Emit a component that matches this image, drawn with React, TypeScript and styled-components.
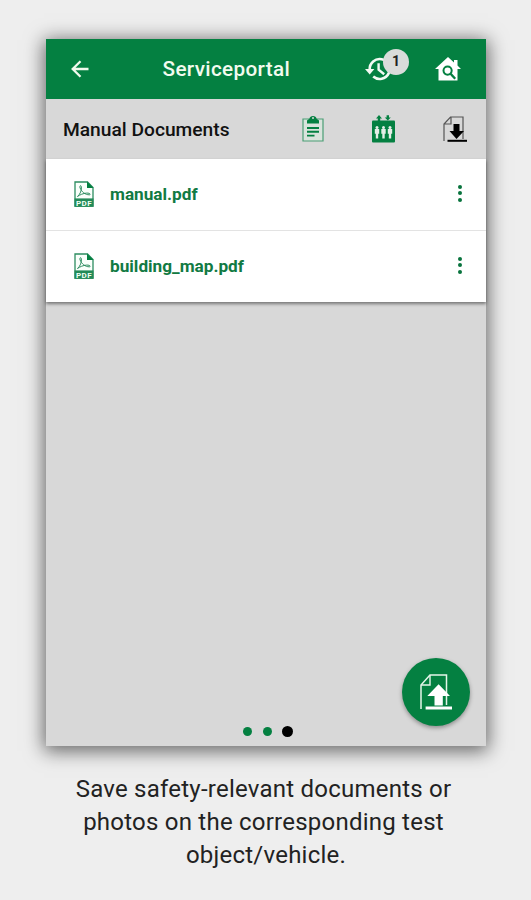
import React from 'react';
import styled, { createGlobalStyle } from 'styled-components';

const GREEN = '#048041';

const documents = ['manual.pdf', 'building_map.pdf'];

const BackIcon = () => (
  <svg width="18" height="18" viewBox="0 0 18 18" fill="none" stroke="#f1faed" strokeWidth="2.3">
    <path d="M17.5 9H2M9.5 1.2L1.7 9l7.8 7.8" />
  </svg>
);

const HistoryIcon = () => (
  <svg width="30" height="26" viewBox="0 0 30 26" fill="none" stroke="#f3faf3">
    <path d="M4.7 13.5A10 10 0 1 1 8.2 20.6" strokeWidth="2.6" />
    <path d="M0 13h9.4l-4.7 5.6z" fill="#f3faf3" stroke="none" />
    <path d="M13.6 7.2v6.4l5.6 4.6" strokeWidth="2.4" />
  </svg>
);

const HomeSearchIcon = () => (
  <svg width="26" height="24" viewBox="0 0 26 24">
    <path d="M13 0l6 5.4V3h3.5v5.6L26 12h-3.5v11.6H3.5V12H0z" fill="#fff" />
    <circle cx="12.6" cy="13.6" r="4.1" fill="none" stroke={GREEN} strokeWidth="2" />
    <path d="M15.6 16.8l4.6 5" stroke={GREEN} strokeWidth="2.4" />
  </svg>
);

const ClipboardIcon = () => (
  <svg width="22" height="27" viewBox="0 0 22 27">
    <path d="M1 4h20v22H1z" fill="#d9e3dc" stroke="#4a9e75" strokeWidth="1.2" />
    <path d="M5 8.6V5.6l2.4-1.8a3.7 3.7 0 0 1 7.2 0L17 5.6v3z" fill={GREEN} />
    <circle cx="11" cy="3" r="1" fill="#d8d8d8" />
    <path d="M5 13h12M5 16.8h12M5 20.6h7.5" stroke={GREEN} strokeWidth="1.9" />
  </svg>
);

const ElevatorIcon = () => (
  <svg width="23" height="28" viewBox="0 0 23 28" fill={GREEN}>
    <path d="M7 0l3 3.4H8.2v2.8H5.8V3.4H4zM15.8 5.6l-3-3.2h1.8V.2H17v2.2h1.8z" />
    <rect x="0" y="5.6" width="23" height="22" rx="1" />
    <g fill="#e5eee7">
      {[5, 11.5, 18].map((x) => (
        <React.Fragment key={x}>
          <circle cx={x} cy="12.4" r="1.5" />
          <path d={`M${x - 2.2} 14h4.4v4.8h-1v4.7h-2.4v-4.7h-1z`} />
        </React.Fragment>
      ))}
    </g>
  </svg>
);

const DownloadIcon = () => (
  <svg width="24" height="26" viewBox="0 0 24 26">
    <path d="M1 25V8l6.5-7H20v22M1.5 8H8V1" fill="none" stroke="#555" strokeWidth="1.2" />
    <path d="M10.5 8h6v7H21l-7.500 8L6.500 15h4z" fill="#000" />
    <path d="M4.5 24.8H24" stroke="#000" strokeWidth="2" />
  </svg>
);

const UploadIcon = () => (
  <svg width="32" height="36" viewBox="0 0 32 36">
    <path d="M1 35V11L10 1h16.5v30" fill="none" stroke="#e5f5e9" strokeWidth="1.5" />
    <path d="M1 11h9V1" fill="none" stroke="#e5f5e9" strokeWidth="1.4" />
    <path d="M14.5 31.5V22H7.3L18.6 10.2 30 22h-7.2v9.5z" fill="#fff" />
    <path d="M5.6 34H32" stroke="#fff" strokeWidth="3" />
  </svg>
);

const PdfIcon = () => (
  <svg width="20" height="26" viewBox="0 0 20 26">
    <path d="M1 1h12.5L19 6.5v18.7H1z" fill="#fafffb" stroke="#2d8d60" strokeWidth="1.3" />
    <path d="M13 .6v6.4h6.6z" fill={GREEN} />
    <path
      d="M3.5 15.5C6 13.5 8 9 7.3 5.6c-.5-2-2-.5-1.2 1.4C7.4 10.2 11 14 15.5 13.8c1.8-.4 0-2-3-1.7-3.4.3-6.5 1.6-9 3.4z"
      fill="none"
      stroke="#2d8d60"
      strokeWidth="1"
    />
    <rect x=".5" y="17.4" width="19" height="8.4" fill="#238a58" />
    <PdfLabel x="10" y="24.5" textAnchor="middle">PDF</PdfLabel>
  </svg>
);

const App: React.FC = () => (
  <>
    <GlobalStyle />
    <Page>
      <Phone>
        <Header>
          <BackIcon />
          <Title>Serviceportal</Title>
          <HistoryButton>
            <HistoryIcon />
            <Badge>1</Badge>
          </HistoryButton>
          <HomeSearchIcon />
        </Header>
        <Toolbar>
          <SectionTitle>Manual Documents</SectionTitle>
          <ToolbarIcons>
            <ClipboardIcon />
            <ElevatorIcon />
            <DownloadIcon />
          </ToolbarIcons>
        </Toolbar>
        <DocumentList>
          {documents.map((name) => (
            <DocumentRow key={name}>
              <PdfIcon />
              <DocumentName>{name}</DocumentName>
              <MoreButton aria-label="More">
                <MoreDot />
                <MoreDot />
                <MoreDot />
              </MoreButton>
            </DocumentRow>
          ))}
        </DocumentList>
        <Footer>
          <UploadButton aria-label="Upload">
            <UploadIcon />
          </UploadButton>
          <Pager>
            <PageDot />
            <PageDot />
            <PageDot $active />
          </Pager>
        </Footer>
      </Phone>
      <Caption>
        Save safety-relevant documents or
        <br />
        photos on the corresponding test
        <br />
        <LastLine>object/vehicle.</LastLine>
      </Caption>
    </Page>
  </>
);

export default App;

// Styled components
const GlobalStyle = createGlobalStyle`
  * {
    box-sizing: border-box;
  }
  body {
    margin: 0;
    background: #eee;
    font-family: Roboto, 'Liberation Sans', sans-serif;
  }
  svg {
    display: block;
    flex-shrink: 0;
  }
`;

const Page = styled.div`
  display: flex;
  flex-direction: column;
  height: 900px;
  padding: 39px 45px 0 46px;
  overflow: hidden;
`;

const Phone = styled.div`
  display: flex;
  flex-direction: column;
  height: 707px;
  background: #d8d8d8;
  box-shadow: 0 3px 18px 2px rgba(0, 0, 0, 0.58);
`;

const Header = styled.header`
  display: flex;
  align-items: center;
  height: 59.5px;
  padding: 0 25px;
  background: ${GREEN};
`;

const Title = styled.h1`
  flex: 1;
  margin: 0 0 0 73.5px;
  color: #f3fbef;
  font-size: 20.7px;
  font-weight: 500;
  letter-spacing: 0.35px;
`;

const HistoryButton = styled.div`
  position: relative;
  margin-right: 40px;
`;

const Badge = styled.span`
  position: absolute;
  top: -7px;
  left: 18px;
  width: 26px;
  height: 26px;
  border-radius: 50%;
  background: #d9dcda;
  color: #222;
  font-size: 14px;
  font-weight: 700;
  line-height: 25px;
  text-align: center;
`;

const Toolbar = styled.div`
  display: flex;
  align-items: center;
  justify-content: space-between;
  height: 60px;
  padding: 0 19px 0 17px;
`;

const SectionTitle = styled.h2`
  margin: 1px 0 0;
  color: #111;
  font-size: 19.2px;
  font-weight: 500;
`;

const ToolbarIcons = styled.div`
  display: flex;
  align-items: center;
  gap: 48px;
`;

const DocumentList = styled.div`
  background: #fff;
  box-shadow: 0 2px 3px rgba(0, 0, 0, 0.45);
`;

const DocumentRow = styled.div`
  display: flex;
  align-items: center;
  height: 71.5px;
  padding: 0 24px 0 28px;

  & + & {
    border-top: 1px solid #e3e3e3;
  }
`;

const DocumentName = styled.span`
  flex: 1;
  margin-left: 16px;
  color: #117a43;
  font-size: 17.2px;
  font-weight: 700;
`;

const MoreButton = styled.div`
  display: flex;
  flex-direction: column;
  gap: 2.3px;
  margin-bottom: 2px;
`;

const MoreDot = styled.span`
  width: 4.2px;
  height: 4.2px;
  border-radius: 50%;
  background: #08733d;
`;

const PdfLabel = styled.text`
  fill: #f2fff5;
  font-size: 8px;
  font-weight: 700;
  letter-spacing: 0.5px;
`;

const Footer = styled.footer`
  display: flex;
  flex-direction: column;
  margin-top: auto;
  padding-bottom: 9px;
`;

const UploadButton = styled.div`
  display: flex;
  align-items: center;
  justify-content: center;
  align-self: flex-end;
  width: 68px;
  height: 68px;
  margin-right: 16px;
  border-radius: 50%;
  background: ${GREEN};
  box-shadow: 0 2px 4px rgba(0, 0, 0, 0.35);
`;

const Pager = styled.div`
  display: flex;
  align-items: center;
  justify-content: center;
  gap: 10.5px;
  padding-left: 4px;
`;

const PageDot = styled.span<{ $active?: boolean }>`
  width: ${({ $active }) => ($active ? '11px' : '9px')};
  height: ${({ $active }) => ($active ? '11px' : '9px')};
  border-radius: 50%;
  background: ${({ $active }) => ($active ? '#000' : GREEN)};
`;

const Caption = styled.p`
  margin: 27px 0 0 -5px;
  color: #222;
  font-size: 24px;
  line-height: 33px;
  text-align: center;
  letter-spacing: 0.23px;
  white-space: nowrap;
`;

const LastLine = styled.span`
  padding-left: 5px;
`;
